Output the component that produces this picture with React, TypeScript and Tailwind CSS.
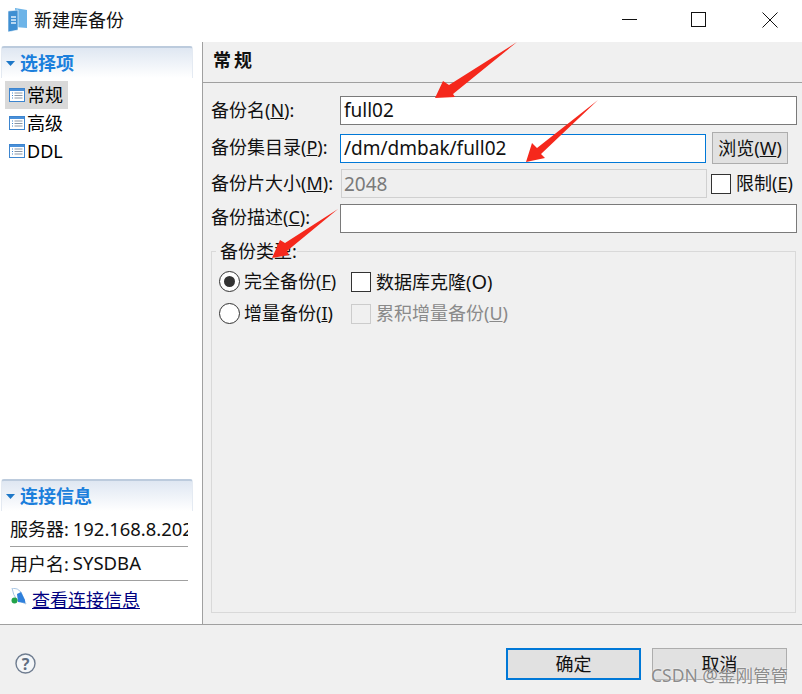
import React from 'react';

const font = { fontFamily: '"Noto Sans", "Noto Sans CJK SC", sans-serif' };

const ListIcon = () => (
  <svg width="16" height="14" viewBox="0 0 16 14" className="shrink-0">
    <rect x="0.5" y="0.5" width="15" height="13" fill="#fff" stroke="#3d85cf" />
    <rect x="1" y="1" width="14" height="2" fill="#4a90d9" />
    <path d="M3 5h1M3 7.5h1M3 10h1" stroke="#3d85cf" />
    <path d="M5.5 5h8M5.5 7.5h8M5.5 10h8" stroke="#8a97a6" />
  </svg>
);

const SectionHeader = ({ title }: { title: string }) => (
  <div className="h-[32px] ml-[1px] w-[192px] flex items-center rounded-t-[3px] border-t-2 border-x border-t-[#bccbdd] border-x-[#e4eaf2] bg-gradient-to-b from-[#dfe7f2] to-white">
    <svg width="9" height="5" viewBox="0 0 9 5" className="ml-[4px] mr-[5px]">
      <path d="M0 0h9L4.5 5z" fill="#1e78c8" />
    </svg>
    <span className="text-[18px] font-bold text-[#1b7fdc] leading-none">{title}</span>
  </div>
);

const NavItem = ({ label, selected }: { label: string; selected?: boolean }) => (
  <div className={`h-[28px] w-[63px] ml-[5px] pl-[4px] flex items-center text-black ${selected ? 'bg-[#d9d9d9]' : ''}`}>
    <ListIcon />
    <span className="text-[18px] ml-[2px] leading-none">{label}</span>
  </div>
);

const Label = ({ text, hot, suffix = ':' }: { text: string; hot: string; suffix?: string }) => (
  <span className="text-[18px] leading-none whitespace-nowrap">
    {text}(<u>{hot}</u>){suffix}
  </span>
);

const Check = ({ disabled }: { disabled?: boolean }) => (
  <span className={`block w-[20px] h-[20px] shrink-0 border ${disabled ? 'border-[#cccccc] bg-[#f0f0f0]' : 'border-[#333333] bg-white'}`} />
);

const Radio = ({ checked }: { checked?: boolean }) => (
  <span className="w-[21px] h-[21px] shrink-0 rounded-full border border-[#333333] bg-white flex items-center justify-center">
    {checked && <span className="w-[11px] h-[11px] rounded-full bg-[#333333]" />}
  </span>
);

const Arrows = () => (
  <svg width="802" height="694" viewBox="0 0 802 694" className="absolute left-0 top-0 pointer-events-none">
    <path d="M517 42 L449 85 L443 81 L435 98 L455 97 L453 94 Z" fill="#f5281c" />
    <path d="M598 100 L537 148 L532 143 L526 162 L545 158 L541 154 Z" fill="#f5281c" />
    <path d="M338 209 L285 243 L280 240 L272 258 L289 255 L287 251 Z" fill="#f5281c" />
  </svg>
);

export default function App() {
  return (
    <div className="relative w-[802px] h-[694px] overflow-hidden bg-white text-[#111111] flex flex-col" style={font}>
      {/* title bar */}
      <div className="h-[42px] shrink-0 bg-white flex items-center pb-[2px]">
        <svg width="20" height="24" viewBox="0 0 20 24" className="ml-[8px]">
          <path d="M7 0 L19 2 V20 L7 19 Z" fill="#6db4e8" />
          <path d="M0 3 L10 2 V22 L0 24 Z" fill="#3f8fd2" stroke="#ffffff" strokeWidth="0.6" />
          <path d="M3 9h5M3 12h5M3 15h5" stroke="#e4f1fb" strokeWidth="1.4" />
        </svg>
        <span className="ml-[6px] text-[18px] leading-none">新建库备份</span>
        <div className="ml-auto flex items-center">
          <svg width="16" height="16" viewBox="0 0 16 16" className="mr-[53px]">
            <path d="M0 7.5h15" stroke="#111" />
          </svg>
          <svg width="16" height="16" viewBox="0 0 16 16" className="mr-[55px]">
            <rect x="0.5" y="0.5" width="14" height="14" fill="none" stroke="#111" />
          </svg>
          <svg width="16" height="16" viewBox="0 0 16 16" className="mr-[24px]">
            <path d="M0.5 0.5l15 15M15.5 0.5l-15 15" stroke="#111" />
          </svg>
        </div>
      </div>

      <div className="flex h-[582px] shrink-0">
        {/* sidebar */}
        <div className="w-[203px] shrink-0 border-r border-[#a0a0a0] flex flex-col justify-between bg-white pt-[4px] pb-[5px]">
          <div>
            <SectionHeader title="选择项" />
            <div className="mt-[3px]">
              <NavItem label="常规" selected />
              <NavItem label="高级" />
              <NavItem label="DDL" />
            </div>
          </div>
          <div>
            <SectionHeader title="连接信息" />
            <div className="ml-[10px] w-[178px] text-[18px]">
              <div className="h-[36px] pt-[1px] flex items-center overflow-hidden whitespace-nowrap border-b border-[#a0a0a0] leading-none">
                服务器: <span className="ml-[4px] text-[18.4px] shrink-0">192.168.8.202</span>
              </div>
              <div className="h-[34px] flex items-center border-b border-[#a0a0a0] leading-none">
                用户名: <span className="ml-[4px] text-[18.5px]">SYSDBA</span>
              </div>
              <div className="h-[38px] flex items-center">
                <svg width="16" height="20" viewBox="0 0 16 20" className="ml-[1px] mr-[5px] mb-[5px]">
                  <path d="M1 0 Q7 0 10 4 L15 16 L6 12 Q2 7 1 0 Z" fill="none" stroke="#a9c6e4" />
                  <path d="M6 6 L10 4 L14 12 L14 15 L7 14 Z" fill="#2f80dc" />
                  <circle cx="3.5" cy="12.5" r="3" fill="#22a34a" />
                </svg>
                <a className="text-[#000080] underline leading-none">查看连接信息</a>
              </div>
            </div>
          </div>
        </div>

        {/* main panel */}
        <div className="flex-1 bg-[#f0f0f0] flex flex-col">
          <div className="h-[41px] shrink-0 border-b border-[#a0a0a0] pl-[10px] flex items-center">
            <span className="text-[18px] font-bold tracking-[3px] leading-none mb-[4px]">常规</span>
          </div>
          <div className="flex-1 pl-[8px] pr-[5px] pt-[13px]">
            <div className="flex items-center h-[29px]">
              <div className="w-[129px]"><Label text="备份名" hot="N" /></div>
              <div className="w-[457px] h-[29px] border border-[#7a7a7a] bg-white px-[3px] flex items-center text-[19px] leading-none">full02</div>
            </div>
            <div className="flex items-center h-[32px] mt-[7px]">
              <div className="w-[129px]"><Label text="备份集目录" hot="P" /></div>
              <div className="w-[366px] h-[29px] border border-[#0078d7] bg-white px-[3px] flex items-center text-[19px] leading-none">/dm/dmbak/full02</div>
              <div className="ml-[6px] w-[76px] h-[32px] border border-[#adadad] bg-[#e1e1e1] flex items-center justify-center"><Label text="浏览" hot="W" suffix="" /></div>
            </div>
            <div className="flex items-center h-[29px] mt-[5px]">
              <div className="w-[129px]"><Label text="备份片大小" hot="M" /></div>
              <div className="w-[366px] ml-[1px] h-[29px] border border-[#d0d0d0] bg-[#efefef] px-[2px] pt-[1px] flex items-center text-[19px] text-[#7a7a7a] leading-none">2048</div>
              <div className="ml-[4px]"><Check /></div>
              <div className="ml-[5px]"><Label text="限制" hot="E" suffix="" /></div>
            </div>
            <div className="flex items-center h-[29px] mt-[6px]">
              <div className="w-[129px] mb-[2px]"><Label text="备份描述" hot="C" /></div>
              <div className="w-[457px] h-[29px] border border-[#7a7a7a] bg-white" />
            </div>

            {/* backup type group */}
            <div className="relative mt-[18px] w-[585px] h-[362px] border border-[#d9d9d9] pl-[7px] pt-[19px]">
              <span className="absolute left-[4px] top-[-10px] bg-[#f0f0f0] pl-[4px] text-[18px] leading-none">备份类型:</span>
              <div className="flex items-center h-[21px]">
                <Radio checked />
                <div className="ml-[4px] w-[107px]"><Label text="完全备份" hot="F" suffix="" /></div>
                <Check />
                <span className="ml-[5px] text-[18px] leading-none">数据库克隆(<span className="text-[20px]">O</span>)</span>
              </div>
              <div className="flex items-center h-[21px] mt-[11px]">
                <Radio />
                <div className="ml-[4px] w-[107px]"><Label text="增量备份" hot="I" suffix="" /></div>
                <Check disabled />
                <span className="ml-[5px] text-[#8a8a8a]"><Label text="累积增量备份" hot="U" suffix="" /></span>
              </div>
            </div>
          </div>
        </div>
      </div>

      {/* footer */}
      <div className="flex-1 bg-[#f0f0f0] border-t border-[#a0a0a0] flex items-center pt-[8px] pl-[15px] pr-[15px]">
        <svg width="21" height="21" viewBox="0 0 21 21">
          <circle cx="10.5" cy="10.5" r="9.5" fill="#f4f6f8" stroke="#6f7d90" strokeWidth="1.4" />
          <text x="10.5" y="16.5" textAnchor="middle" fontSize="16" fontWeight="700" fill="#5f6d80">?</text>
        </svg>
        <div className="ml-auto flex">
          <div className="w-[135px] h-[32px] border-2 border-[#0078d7] bg-[#e1e1e1] flex items-center justify-center text-[18px] leading-none">确定</div>
          <div className="ml-[11px] w-[135px] h-[32px] border border-[#adadad] bg-[#e1e1e1] flex items-center justify-center text-[18px] leading-none">取消</div>
        </div>
      </div>

      <Arrows />
      <span className="absolute left-[651px] top-[667px] text-[17.5px] leading-none text-[#8c8c8c] whitespace-nowrap [text-shadow:0_0_2px_#ffffff]">CSDN @金刚管管</span>
    </div>
  );
}
